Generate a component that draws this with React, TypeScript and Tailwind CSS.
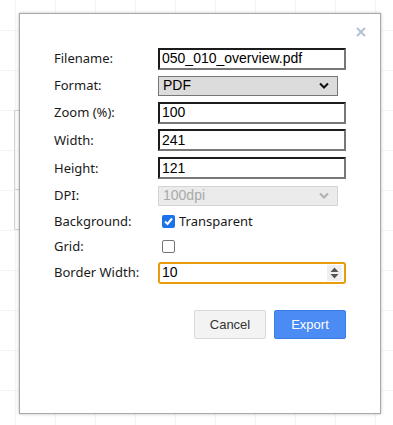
import React from "react";

const labelFont = { fontFamily: '"Noto Sans", "Open Sans", sans-serif' };
const inputFont = { fontFamily: '"Liberation Sans", Arial, sans-serif' };

function Row({ label, h, children }: { label: string; h: string; children: React.ReactNode }) {
  return (
    <div className={`flex items-center ${h}`}>
      <div className="w-[104px] shrink-0 text-[13px] text-[#1a1a1a] leading-none" style={labelFont}>
        {label}
      </div>
      <div className="flex items-center">{children}</div>
    </div>
  );
}

function TextBox({ value }: { value: string }) {
  return (
    <div
      className="w-[188px] h-[22px] border-2 border-t-[#1c1c1c] border-l-[#1c1c1c] border-r-[#777777] border-b-[#777777] bg-white px-[2px] flex items-center text-[14px] text-black"
      style={inputFont}
    >
      {value}
    </div>
  );
}

function Chevron({ color }: { color: string }) {
  return (
    <svg width="10" height="7" viewBox="0 0 10 7">
      <path d="M1 1.5 L5 5.5 L9 1.5" fill="none" stroke={color} strokeWidth="2" />
    </svg>
  );
}

export default function App() {
  return (
    <div className="relative w-[393px] h-[425px] overflow-hidden bg-white bg-[linear-gradient(to_right,#f4f4f4_1px,transparent_1px),linear-gradient(to_bottom,#f4f4f4_1px,transparent_1px)] bg-[size:40px_40px] bg-[position:15px_30px] pt-[13px] pl-[19px]">
      <div className="absolute left-[14px] top-[110px] w-[40px] h-[120px] border border-[#d4d4d4]">
        <div className="h-[79px] border-b border-[#d4d4d4]" />
      </div>
      <div className="relative w-[362px] h-[401px] bg-white border border-[#a8a8a8] shadow-[0_0_3px_rgba(0,0,0,0.25)] pt-[31px] pl-[34px] pr-[34px]">
        <div className="absolute top-[13px] right-[14px] w-[10px] h-[10px]">
          <svg width="10" height="10" viewBox="0 0 10 10">
            <path d="M1 1 L9 9 M9 1 L1 9" stroke="#b4c1d4" strokeWidth="2" />
          </svg>
        </div>
        <div className="flex flex-col">
          <Row label="Filename:" h="h-[27px]">
            <TextBox value="050_010_overview.pdf" />
          </Row>
          <Row label="Format:" h="h-[27px]">
            <div
              className="w-[180px] h-[20px] border border-[#767676] bg-[#dcdcdc] pl-[4px] pr-[8px] flex items-center justify-between text-[14px] text-black"
              style={inputFont}
            >
              <span>PDF</span>
              <Chevron color="#111" />
            </div>
          </Row>
          <Row label="Zoom (%):" h="h-[27px]">
            <TextBox value="100" />
          </Row>
          <Row label="Width:" h="h-[28px]">
            <TextBox value="241" />
          </Row>
          <Row label="Height:" h="h-[28px]">
            <TextBox value="121" />
          </Row>
          <Row label="DPI:" h="h-[27px]">
            <div
              className="w-[180px] h-[20px] border border-[#d4d4d4] bg-[#ebebeb] pl-[4px] pr-[8px] flex items-center justify-between text-[14px] text-[#a9a9a9]"
              style={inputFont}
            >
              <span>100dpi</span>
              <Chevron color="#b0b0b0" />
            </div>
          </Row>
          <Row label="Background:" h="h-[25px]">
            <div className="ml-[4px] w-[13px] h-[13px] rounded-[2px] bg-[#1a73e8] flex items-center justify-center">
              <svg width="11" height="11" viewBox="0 0 11 11">
                <path d="M2 5.5 L4.5 8 L9 2.5" fill="none" stroke="white" strokeWidth="2" />
              </svg>
            </div>
            <span className="ml-[4px] text-[13px] text-[#1a1a1a]" style={labelFont}>
              Transparent
            </span>
          </Row>
          <Row label="Grid:" h="h-[25px]">
            <div className="ml-[4px] w-[13px] h-[13px] rounded-[2px] border border-[#767676] bg-white" />
          </Row>
          <Row label="Border Width:" h="h-[27px]">
            <div
              className="w-[188px] h-[22px] border-2 border-[#e89c0c] rounded-[3px] bg-white pl-[2px] pr-[2px] flex items-center justify-between text-[14px] text-black"
              style={inputFont}
            >
              <span>10</span>
              <div className="w-[15px] h-[16px] bg-[#efefef] flex items-center justify-center">
                <svg width="9" height="12" viewBox="0 0 9 12">
                  <path d="M4.5 0.5 L8.5 5 L0.5 5 Z" fill="#555" />
                  <path d="M0.5 7 L8.5 7 L4.5 11.5 Z" fill="#555" />
                </svg>
              </div>
            </div>
          </Row>
        </div>
        <div className="mt-[24px] flex justify-end gap-[8px]" style={inputFont}>
          <div className="w-[72px] h-[29px] rounded-[2px] border border-[#d9d9d9] bg-[#f3f3f3] flex items-center justify-center text-[13px] text-[#333]">
            Cancel
          </div>
          <div className="w-[72px] h-[29px] rounded-[2px] border border-[#3b7de8] bg-[#4a8bf4] flex items-center justify-center text-[13px] text-white">
            Export
          </div>
        </div>
      </div>
    </div>
  );
}
